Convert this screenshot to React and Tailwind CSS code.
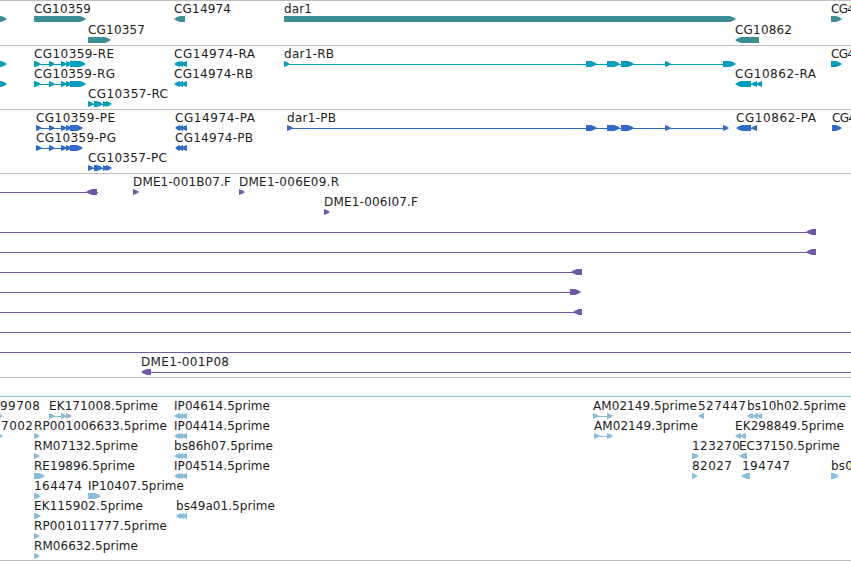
import React from 'react';

// a feature is { row, label: [text, x, width], line: [x1, x2], dir, blocks: [[x1, x2], ...] }
const genes = [
  { row: 0, dir: 1, blocks: [[-4, 7]] },
  { row: 0, label: ['CG10359', 34, 57], dir: 1, blocks: [[34, 86]] },
  { row: 0, label: ['CG14974', 174, 57], dir: -1, blocks: [[174, 185]] },
  { row: 0, label: ['dar1', 284, 28], dir: 1, blocks: [[284, 736]] },
  { row: 0, label: ['CG4', 831, 24], dir: 1, blocks: [[831, 842]] },
  { row: 1, label: ['CG10357', 88, 57], dir: 1, blocks: [[88, 111]] },
  { row: 1, label: ['CG10862', 735, 57], dir: -1, blocks: [[735, 759]] },
];

const transcripts = [
  { row: 0, dir: 1, blocks: [[-4, 7]] },
  { row: 1, dir: 1, blocks: [[-4, 7]] },
  { row: 0, label: ['CG10359-RE', 34, 80], line: [34, 80], dir: 1, blocks: [[34, 41], [49, 55], [61, 67], [66, 72], [70, 86]] },
  { row: 1, label: ['CG10359-RG', 34, 81], line: [34, 80], dir: 1, blocks: [[34, 41], [49, 55], [61, 67], [66, 72], [70, 86]] },
  { row: 2, label: ['CG10357-RC', 88, 80], line: [88, 108], dir: 1, blocks: [[88, 94], [94, 103], [103, 109], [106, 112]] },
  { row: 0, label: ['CG14974-RA', 174, 81], line: [176, 187], dir: -1, blocks: [[174, 180], [177, 183], [181, 187]] },
  { row: 1, label: ['CG14974-RB', 174, 79], line: [176, 187], dir: -1, blocks: [[174, 180], [177, 183], [181, 187]] },
  { row: 0, label: ['dar1-RB', 284, 50], line: [284, 730], dir: 1, blocks: [[284, 290], [586, 597], [607, 620], [621, 634], [665, 671], [723, 736]] },
  { row: 1, label: ['CG10862-RA', 735, 81], line: [740, 762], dir: -1, blocks: [[735, 751], [751, 757], [756, 762]] },
  { row: 0, label: ['CG4', 831, 24], dir: 1, blocks: [[831, 842]] },
];

const proteins = [
  { row: 0, label: ['CG10359-PE', 36, 79], line: [36, 80], dir: 1, blocks: [[36, 42], [49, 55], [61, 67], [66, 72], [70, 83]] },
  { row: 1, label: ['CG10359-PG', 36, 80], line: [36, 80], dir: 1, blocks: [[36, 42], [49, 55], [61, 67], [66, 72], [70, 83]] },
  { row: 2, label: ['CG10357-PC', 88, 79], line: [88, 108], dir: 1, blocks: [[88, 94], [94, 103], [103, 109], [106, 112]] },
  { row: 0, label: ['CG14974-PA', 175, 80], line: [177, 187], dir: -1, blocks: [[175, 180], [178, 183], [181, 187]] },
  { row: 1, label: ['CG14974-PB', 175, 78], line: [177, 187], dir: -1, blocks: [[175, 180], [178, 183], [181, 187]] },
  { row: 0, label: ['dar1-PB', 287, 49], line: [287, 724], dir: 1, blocks: [[287, 293], [586, 597], [607, 620], [621, 634], [665, 671], [723, 729]] },
  { row: 0, label: ['CG10862-PA', 736, 80], line: [740, 757], dir: -1, blocks: [[736, 751], [751, 757]] },
  { row: 0, label: ['CG4', 832, 24], dir: 1, blocks: [[832, 842]] },
];

const clones = [
  { row: 0, line: [0, 98], dir: -1, blocks: [[86, 97]] },
  { row: 0, label: ['DME1-001B07.F', 133, 98], dir: 1, blocks: [[133, 139]] },
  { row: 0, label: ['DME1-006E09.R', 239, 100], dir: 1, blocks: [[239, 245]] },
  { row: 1, label: ['DME1-006I07.F', 324, 94], dir: 1, blocks: [[324, 330]] },
  { row: 2, line: [0, 810], dir: -1, blocks: [[806, 816]] },
  { row: 3, line: [0, 810], dir: -1, blocks: [[806, 816]] },
  { row: 4, line: [0, 576], dir: -1, blocks: [[571, 582]] },
  { row: 5, line: [0, 576], dir: 1, blocks: [[570, 581]] },
  { row: 6, line: [0, 578], dir: -1, blocks: [[573, 582]] },
  { row: 7, line: [0, 851], dir: 1, blocks: [] },
  { row: 8, line: [0, 851], dir: 1, blocks: [] },
  { row: 9, label: ['DME1-001P08', 141, 88], line: [146, 851], dir: -1, blocks: [[141, 151]] },
];

const ests = [
  { row: 0, label: ['99708', 0, 40], dir: 1, blocks: [[-3, 3]] },
  { row: 0, label: ['EK171008.5prime', 49, 109], line: [49, 66], dir: 1, blocks: [[49, 55], [61, 67], [66, 72]] },
  { row: 0, label: ['IP04614.5prime', 174, 96], line: [176, 187], dir: -1, blocks: [[174, 180], [177, 183], [181, 187]] },
  { row: 0, label: ['AM02149.5prime', 593, 104], line: [593, 608], dir: 1, blocks: [[593, 599], [607, 613]] },
  { row: 0, label: ['527447', 698, 48], dir: -1, blocks: [[698, 704]] },
  { row: 0, label: ['bs10h02.5prime', 747, 99], line: [750, 762], dir: -1, blocks: [[747, 753], [752, 758], [757, 762]] },
  { row: 1, label: ['77002', -7, 40], dir: 1, blocks: [[-3, 3]] },
  { row: 1, label: ['RP001006633.5prime', 34, 133], dir: 1, blocks: [[34, 40]] },
  { row: 1, label: ['IP04414.5prime', 174, 96], line: [176, 187], dir: -1, blocks: [[174, 180], [177, 183], [181, 187]] },
  { row: 1, label: ['AM02149.3prime', 594, 104], line: [594, 608], dir: 1, blocks: [[594, 600], [607, 613]] },
  { row: 1, label: ['EK298849.5prime', 735, 109], line: [737, 746], dir: -1, blocks: [[735, 741], [740, 746]] },
  { row: 2, label: ['RM07132.5prime', 34, 104], dir: 1, blocks: [[34, 40]] },
  { row: 2, label: ['bs86h07.5prime', 174, 99], line: [176, 187], dir: -1, blocks: [[174, 180], [177, 183], [181, 187]] },
  { row: 2, label: ['123270', 692, 48], dir: 1, blocks: [[692, 699]] },
  { row: 2, label: ['EC37150.5prime', 739, 101], dir: -1, blocks: [[739, 747]] },
  { row: 3, label: ['RE19896.5prime', 34, 101], dir: 1, blocks: [[34, 45]] },
  { row: 3, label: ['IP04514.5prime', 174, 96], line: [176, 187], dir: -1, blocks: [[174, 180], [177, 183], [181, 187]] },
  { row: 3, label: ['82027', 692, 40], dir: 1, blocks: [[692, 698]] },
  { row: 3, label: ['194747', 742, 48], dir: -1, blocks: [[741, 750]] },
  { row: 3, label: ['bs0', 831, 22], dir: 1, blocks: [[831, 839]] },
  { row: 4, label: ['164474', 34, 48], dir: 1, blocks: [[34, 41]] },
  { row: 4, label: ['IP10407.5prime', 88, 96], dir: 1, blocks: [[88, 101]] },
  { row: 5, label: ['EK115902.5prime', 34, 109], dir: 1, blocks: [[34, 41]] },
  { row: 5, label: ['bs49a01.5prime', 176, 99], line: [178, 187], dir: -1, blocks: [[176, 181], [179, 184], [182, 187]] },
  { row: 6, label: ['RP001011777.5prime', 34, 133], dir: 1, blocks: [[34, 40]] },
  { row: 7, label: ['RM06632.5prime', 34, 104], dir: 1, blocks: [[34, 40]] },
];

// bar with a slightly rounded arrow head, 6px high
const Block = ({ x1, x2, y, dir }) => {
  const tip = Math.min(6, x2 - x1);
  const tail = dir > 0 ? x1 : x2;
  const head = dir > 0 ? x2 : x1;
  const neck = head - dir * tip;
  const mid = head - dir * tip * 0.45;
  return (
    <polygon
      points={`${tail},${y} ${neck},${y} ${mid},${y + 1.2} ${head},${y + 3} ${mid},${y + 4.8} ${neck},${y + 6} ${tail},${y + 6}`}
    />
  );
};

const Feature = ({ feature, top }) => {
  const { label, line, dir, blocks } = feature;
  return (
    <g>
      {line && <rect x={line[0]} y={top + 18} width={line[1] - line[0]} height="1" />}
      {blocks.map(([x1, x2]) => (
        <Block key={x1} x1={x1} x2={x2} y={top + 15} dir={dir} />
      ))}
      {label && (
        <text x={label[1]} y={top + 12} textLength={label[2]} className="fill-[#1c1c1c]">
          {label[0]}
        </text>
      )}
    </g>
  );
};

const Track = ({ features, pitch = 20, offset = 0, className }) => (
  <section className={`w-full shrink-0 overflow-hidden border-t ${className}`}>
    <svg className="block h-full w-[851px] fill-current text-[12px]">
      {features.map((feature, i) => (
        <Feature key={i} feature={feature} top={offset + feature.row * pitch} />
      ))}
    </svg>
  </section>
);

const App = () => {
  return (
    <main className="flex h-[561px] w-[851px] flex-col overflow-hidden bg-white font-['DejaVu_Sans',sans-serif]">
      <Track features={genes} pitch={21} className="h-[45px] border-[#bebebe] text-[#3d8e94]" />
      <Track features={transcripts} className="h-[64px] border-[#bebebe] text-[#009dbf]" />
      <Track features={proteins} className="h-[64px] border-[#bebebe] text-[#306bcb]" />
      <Track features={clones} className="h-[204px] border-[#bebebe] text-[#7358a8]" />
      {/* collapsed track */}
      <div className="h-[19px] shrink-0 border-t border-[#bebebe]" />
      <Track features={ests} offset={1} className="h-[164px] border-[#88bddd] text-[#88bddd]" />
      <div className="h-px shrink-0 bg-[#bebebe]" />
    </main>
  );
};

export default App;
